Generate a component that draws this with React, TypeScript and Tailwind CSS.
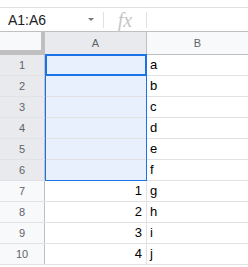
import React from "react";

const rows = [
  { a: "", b: "a" },
  { a: "", b: "b" },
  { a: "", b: "c" },
  { a: "", b: "d" },
  { a: "", b: "e" },
  { a: "", b: "f" },
  { a: "1", b: "g" },
  { a: "2", b: "h" },
  { a: "3", b: "i" },
  { a: "4", b: "j" },
];

export default function App() {
  return (
    <div className="w-[248px] h-[267px] overflow-hidden bg-white relative" style={{ fontFamily: '"Liberation Sans", Arial, sans-serif' }}>
      <div className="h-[7px]" />
      {/* formula bar */}
      <div className="h-[24px] border-t border-[#e0e0e0] flex items-center">
        <div className="w-[103px] flex items-center h-full pl-[8px] pr-[8px]">
          <span className="text-[14px] text-[#202124] flex-1 leading-none">A1:A6</span>
          <svg width="6" height="3" viewBox="0 0 6 3" className="mr-[1px]"><path d="M0 0h6L3 3z" fill="#777" /></svg>
        </div>
        <div className="w-px h-[16px] bg-[#e0e0e0]" />
        <div className="w-[42px] flex items-center justify-center">
          <span className="text-[20px] italic text-[#c6c6c6] leading-none" style={{ fontFamily: '"Liberation Serif", serif' }}>fx</span>
        </div>
        <div className="w-px h-[16px] bg-[#e0e0e0]" />
      </div>
      {/* header row */}
      <div className="flex h-[24px] border-t border-[#c0c0c0] border-b border-b-[#c0c0c0]">
        <div className="w-[45px] h-full flex flex-col">
          <div className="flex-1 flex">
            <div className="flex-1 bg-[#f8f9fa]" />
            <div className="w-[4px] bg-[#bfbfbf]" />
          </div>
          <div className="h-[4px] bg-[#bfbfbf]" />
        </div>
        <div className="w-[102px] bg-[#e8eaed] border-r border-[#c0c0c0] flex items-center justify-center text-[11px] text-[#5f6368]">A</div>
        <div className="flex-1 bg-[#f8f9fa] flex items-center justify-center text-[11px] text-[#5f6368]">B</div>
      </div>
      {/* rows */}
      {rows.map((r, i) => {
        const sel = i < 6;
        return (
          <div key={i} className="flex h-[21px] border-b border-[#e2e2e2]">
            <div className={`w-[45px] h-full flex items-center justify-center text-[11px] text-[#5f6368] border-r border-[#c0c0c0] ${sel ? "bg-[#e8eaed]" : "bg-[#f8f9fa]"}`}>
              {i + 1}
            </div>
            <div className={`w-[102px] h-full border-r border-[#e2e2e2] flex items-center justify-end pr-[4px] text-[13px] text-black ${sel ? "bg-[#e8f0fe]" : ""}`}>
              {r.a}
            </div>
            <div className="flex-1 h-full flex items-center pl-[3px] text-[13px] text-black">{r.b}</div>
          </div>
        );
      })}
      {/* selection overlay */}
      <div className="absolute left-[45px] top-[55px] w-[102px] h-[126px] border border-[#1a73e8] pointer-events-none" />
      <div className="absolute left-[45px] top-[54px] w-[102px] h-[22px] border-2 border-[#1a73e8] pointer-events-none" />
    </div>
  );
}
